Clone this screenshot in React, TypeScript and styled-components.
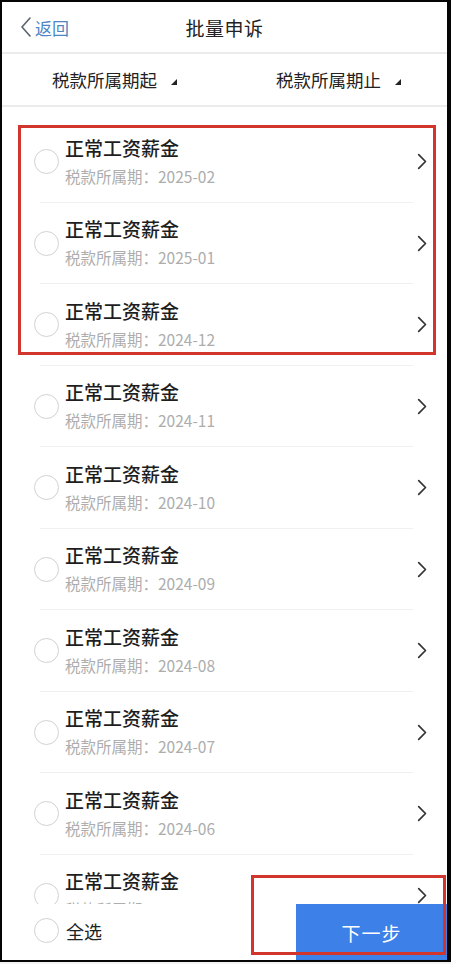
import React from 'react';
import styled, { createGlobalStyle } from 'styled-components';

const GlobalStyle = createGlobalStyle`
    html, body {
        margin: 0;
        padding: 0;
        background: #f4f4f4;
    }
    body {
        font-family: "Noto Sans CJK SC", "Noto Sans", sans-serif;
    }
`;

const Frame = styled.div`
    box-sizing: border-box;
    width: 451px;
    height: 962px;
    border-style: solid;
    border-color: #050505;
    border-width: 2px 4px 2px 2px;
    background: #fff;
    position: relative;
    display: flex;
    flex-direction: column;
    overflow: hidden;
`;

const Header = styled.header`
    height: 50px;
    flex-shrink: 0;
    display: grid;
    grid-template-columns: 1fr auto 1fr;
    align-items: center;
    padding: 0 18px;
`;

const BackLink = styled.a`
    display: flex;
    align-items: center;
    gap: 3px;
    color: #4d86c4;
    font-size: 17px;
    text-decoration: none;
`;

const Title = styled.h1`
    margin: 0;
    font-size: 19px;
    font-weight: 400;
    color: #222;
    letter-spacing: 0.5px;
`;

const Divider = styled.div`
    height: 2px;
    flex-shrink: 0;
    background: #ebebeb;
`;

const FilterBar = styled.div`
    height: 51px;
    flex-shrink: 0;
    display: flex;
    align-items: center;
    justify-content: space-between;
    padding: 0 46px 0 50px;
`;

const FilterItem = styled.div`
    display: flex;
    align-items: center;
    gap: 14px;
    font-size: 17.5px;
    color: #222;
`;

const Corner = styled.span`
    width: 0;
    height: 0;
    margin-top: 4px;
    border-left: 6px solid transparent;
    border-bottom: 6px solid #222;
`;

const List = styled.div`
    flex: 1;
    overflow: hidden;
    padding-top: 14px;
`;

const Row = styled.div`
    height: 81.5px;
    display: flex;
    align-items: center;
    padding: 0 20px 0 32px;
    position: relative;
    &:not(:last-child)::after {
        content: '';
        position: absolute;
        left: 38px;
        right: 34px;
        bottom: 0;
        height: 1px;
        background: #f0f0f0;
    }
`;

const Radio = styled.span`
    width: 23px;
    height: 23px;
    flex-shrink: 0;
    border-radius: 50%;
    border: 1.5px solid #d2d2d2;
`;

const RowText = styled.div`
    flex: 1;
    margin-left: 6px;
    display: flex;
    flex-direction: column;
    gap: 6px;
    margin-top: -2px;
`;

const RowTitle = styled.div`
    font-size: 19px;
    line-height: 24px;
    color: #1e1e1e;
    font-weight: 500;
`;

const RowMeta = styled.div`
    font-size: 15.5px;
    line-height: 20px;
    color: #adadad;
`;

const Footer = styled.div`
    height: 56px;
    flex-shrink: 0;
    display: flex;
    align-items: stretch;
    background: #fff;
`;

const SelectAll = styled.label`
    flex: 1;
    display: flex;
    align-items: center;
    gap: 7px;
    padding-left: 32px;
    padding-bottom: 3px;
    font-size: 18px;
    color: #222;
`;

const NextButton = styled.button`
    width: 151px;
    border: none;
    background: #3d80e8;
    color: #fff;
    font-family: inherit;
    font-size: 19px;
    letter-spacing: 1px;
    cursor: pointer;
`;

const Mark = styled.div<{ $top: number; $left: number; $width: number; $height: number }>`
    position: absolute;
    top: ${p => p.$top}px;
    left: ${p => p.$left}px;
    width: ${p => p.$width}px;
    height: ${p => p.$height}px;
    box-sizing: border-box;
    border: 3px solid #d2352b;
    pointer-events: none;
`;

const periods = [
    '2025-02', '2025-01', '2024-12', '2024-11', '2024-10',
    '2024-09', '2024-08', '2024-07', '2024-06', '2024-05',
];

const Chevron: React.FC<{ dir: 'left' | 'right'; color: string; size: number }> = ({ dir, color, size }) => (
    <svg width={size * 0.6} height={size} viewBox="0 0 12 20" fill="none">
        <path
            d={dir === 'right' ? 'M2 2 L10 10 L2 18' : 'M10 1 L2 10 L10 19'}
            stroke={color}
            strokeWidth={dir === 'right' ? 2 : 1.6}
            strokeLinecap="round"
            strokeLinejoin="round"
        />
    </svg>
);

const App: React.FC = () => {
    return (
        <>
            <GlobalStyle />
            <Frame>
                <Header>
                    <BackLink href="#">
                        <Chevron dir="left" color="#5a6470" size={20} />
                        返回
                    </BackLink>
                    <Title>批量申诉</Title>
                    <span />
                </Header>
                <Divider />
                <FilterBar>
                    <FilterItem>税款所属期起<Corner /></FilterItem>
                    <FilterItem>税款所属期止<Corner /></FilterItem>
                </FilterBar>
                <Divider />
                <List>
                    {periods.map(p => (
                        <Row key={p}>
                            <Radio />
                            <RowText>
                                <RowTitle>正常工资薪金</RowTitle>
                                <RowMeta>税款所属期：{p}</RowMeta>
                            </RowText>
                            <Chevron dir="right" color="#333" size={17} />
                        </Row>
                    ))}
                </List>
                <Footer>
                    <SelectAll>
                        <Radio />
                        全选
                    </SelectAll>
                    <NextButton>下一步</NextButton>
                </Footer>
                <Mark $top={123} $left={16} $width={418} $height={230} />
                <Mark $top={873} $left={249} $width={195} $height={80} />
            </Frame>
        </>
    );
};

export default App;
